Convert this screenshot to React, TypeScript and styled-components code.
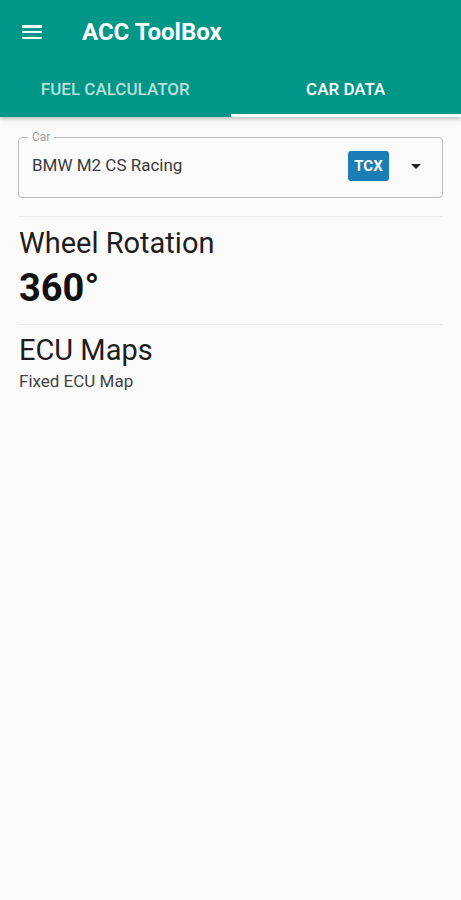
import React from "react";
import styled, { createGlobalStyle } from "styled-components";

const Global = createGlobalStyle`
  html, body { margin: 0; padding: 0; background: #fafafa; }
  body { font-family: Roboto, "Noto Sans", "Liberation Sans", sans-serif; }
  * { box-sizing: border-box; }
`;

const Page = styled.div`
  width: 461px;
  min-height: 900px;
  background: #fafafa;
  display: flex;
  flex-direction: column;
`;

const AppBar = styled.header`
  background: #009688;
  color: #fff;
  display: flex;
  flex-direction: column;
  box-shadow: 0 2px 4px rgba(0, 0, 0, 0.25);
`;

const Toolbar = styled.div`
  height: 62px;
  display: flex;
  align-items: center;
  padding: 2px 0 0 22px;
  gap: 40px;
`;

const MenuButton = styled.div`
  width: 20px;
  height: 14px;
  display: flex;
  flex-direction: column;
  justify-content: space-between;
  span {
    display: block;
    height: 2.5px;
    background: #fff;
    border-radius: 1px;
  }
`;

const Title = styled.h1`
  margin: 0;
  font-size: 24px;
  font-weight: 700;
  line-height: 28px;
`;

const TabRow = styled.div`
  display: grid;
  grid-template-columns: 1fr 1fr;
  height: 55px;
`;

const Tab = styled.div<{ $active?: boolean }>`
  position: relative;
  display: flex;
  align-items: center;
  justify-content: center;
  font-size: 17px;
  font-weight: 500;
  color: ${(p) => (p.$active ? "#ffffff" : "rgba(255,255,255,0.72)")};
  padding-bottom: 2px;
  &::after {
    content: "";
    position: absolute;
    left: 0;
    right: 0;
    bottom: 0;
    height: 3px;
    background: ${(p) => (p.$active ? "#ffffff" : "transparent")};
  }
`;

const Content = styled.main`
  padding: 20px 18px 0 18px;
  display: flex;
  flex-direction: column;
`;

const Field = styled.div`
  height: 61px;
  border: 1px solid #bdbdbd;
  border-radius: 4px;
  padding: 0 21px 0 13px;
  display: flex;
  align-items: center;
  position: relative;
`;

const FloatingLabel = styled.span`
  position: absolute;
  top: -8px;
  left: 9px;
  font-size: 12px;
  line-height: 14px;
  color: #9e9e9e;
  padding: 0 4px;
  background: #fafafa;
`;

const SelectText = styled.div`
  flex: 1;
  font-size: 17px;
  line-height: 20px;
  color: #3a3a3a;
  margin-top: -6px;
`;

const Badge = styled.div`
  width: 41px;
  height: 30px;
  border-radius: 3px;
  background: #1a7db3;
  color: #fff;
  font-size: 15px;
  font-weight: 700;
  display: flex;
  align-items: center;
  justify-content: center;
  margin-right: 22px;
  margin-top: -4px;
`;

const Arrow = styled.div`
  width: 0;
  height: 0;
  border-left: 5px solid transparent;
  border-right: 5px solid transparent;
  border-top: 5px solid #222;
  margin-top: -3px;
`;

const Divider = styled.hr<{ $top: number }>`
  margin: ${(p) => p.$top}px 0 0 0;
  border: none;
  height: 1px;
  background: #ebebeb;
`;

const Section = styled.section<{ $top: number }>`
  display: flex;
  flex-direction: column;
  padding-left: 1px;
  margin-top: ${(p) => p.$top}px;
`;

const Heading = styled.div`
  font-size: 29px;
  line-height: 34px;
  color: #1d1d1d;
`;

const BigValue = styled.div`
  font-size: 38px;
  font-weight: 700;
  line-height: 56px;
  color: #111;
`;

const SubText = styled.div`
  font-size: 17px;
  line-height: 20px;
  color: #444;
  margin-top: 4px;
`;

export default function App() {
  return (
    <Page>
      <Global />
      <AppBar>
        <Toolbar>
          <MenuButton>
            <span />
            <span />
            <span />
          </MenuButton>
          <Title>ACC ToolBox</Title>
        </Toolbar>
        <TabRow>
          <Tab>FUEL CALCULATOR</Tab>
          <Tab $active>CAR DATA</Tab>
        </TabRow>
      </AppBar>
      <Content>
        <Field>
          <FloatingLabel>Car</FloatingLabel>
          <SelectText>BMW M2 CS Racing</SelectText>
          <Badge>TCX</Badge>
          <Arrow />
        </Field>
        <Divider $top={18} />
        <Section $top={9}>
          <Heading>Wheel Rotation</Heading>
          <BigValue>360°</BigValue>
        </Section>
        <Divider $top={8} />
        <Section $top={8}>
          <Heading>ECU Maps</Heading>
          <SubText>Fixed ECU Map</SubText>
        </Section>
      </Content>
    </Page>
  );
}
